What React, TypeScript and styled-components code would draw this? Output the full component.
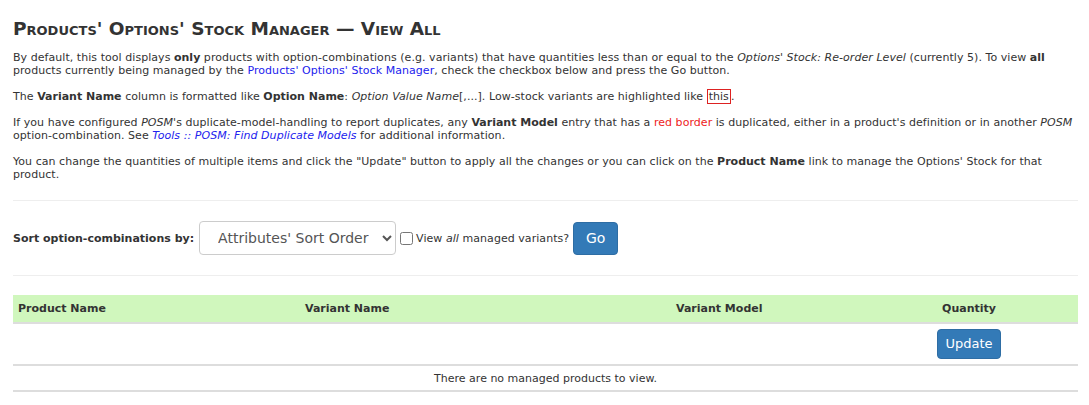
import React from "react";
import styled, { createGlobalStyle } from "styled-components";

const Global = createGlobalStyle`
  html, body { margin: 0; padding: 0; background: #fff; }
  body {
    font-family: "DejaVu Sans", Verdana, sans-serif;
    font-size: 11px;
    line-height: 13px;
    color: #333;
  }
`;

const Page = styled.div`
  padding: 0 11px 0 13px;
`;

const Title = styled.h1`
  margin: 17px 0 10px;
  font-size: 18.5px;
  line-height: 24px;
  font-weight: bold;
  font-variant: small-caps;
  color: #333;
`;

const Para = styled.p`
  margin: 0 0 13px;
  letter-spacing: 0.05px;
  b { letter-spacing: 0; }
  &:last-of-type { margin-bottom: 19px; }
`;

const Link = styled.a<{ $italic?: boolean }>`
  color: #2222ee;
  text-decoration: none;
  font-style: ${(p) => (p.$italic ? "italic" : "normal")};
`;

const Red = styled.span`
  color: #ee2222;
`;

const Boxed = styled.span`
  border: 1px solid #dd2222;
  padding: 0 1px;
`;

const Rule = styled.hr`
  border: 0;
  border-top: 1px solid #eee;
  margin: 0;
`;

const SortForm = styled.form`
  display: flex;
  align-items: center;
  padding: 20px 0 20px;
`;

const Label = styled.label`
  font-weight: bold;
  margin-right: 5px;
`;

const SelectBox = styled.select`
  width: 197px;
  height: 34px;
  padding: 6px 10px 6px 14px;
  font-family: "DejaVu Sans", Verdana, sans-serif;
  font-size: 14px;
  color: #555;
  background: #fff;
  border: 1px solid #ccc;
  border-radius: 4px;
`;

const CheckLabel = styled.label`
  display: flex;
  align-items: center;
  margin: 0 4px 0 4px;
  letter-spacing: 0.05px;
  input { margin: 0 3px 0 0; width: 13px; height: 13px; }
`;

const Button = styled.button<{ $w: number; $h: number; $size: number }>`
  width: ${(p) => p.$w}px;
  height: ${(p) => p.$h}px;
  padding: 0;
  font-family: "DejaVu Sans", Verdana, sans-serif;
  font-size: ${(p) => p.$size}px;
  color: #fff;
  background: #337ab7;
  border: 1px solid #2e6da4;
  border-radius: 4px;
  vertical-align: middle;
`;

const Table = styled.table`
  width: 100%;
  border-collapse: collapse;
  margin-top: 19px;
`;

const Th = styled.th<{ $w: number; $center?: boolean }>`
  width: ${(p) => p.$w}px;
  background: #d0f7bd;
  text-align: ${(p) => (p.$center ? "center" : "left")};
  padding: 0 5px;
  height: 28px;
  box-sizing: border-box;
  border-bottom: 2px solid #ddd;
  font-weight: bold;
`;

const Td = styled.td<{ $center?: boolean }>`
  text-align: ${(p) => (p.$center ? "center" : "left")};
  padding: 4px 5px 5px;
  height: 42px;
  box-sizing: border-box;
  border-bottom: 2px solid #ddd;
  vertical-align: middle;
`;

const EmptyTd = styled.td`
  text-align: center;
  padding: 5px;
  height: 26px;
  box-sizing: border-box;
  border-bottom: 2px solid #ddd;
`;

export default function App() {
  return (
    <Page>
      <Global />
      <Title>Products' Options' Stock Manager — View All</Title>
      <Para>
        By default, this tool displays <b>only</b> products with option-combinations (e.g. variants) that have
        quantities less than or equal to the <i>Options' Stock: Re-order Level</i> (currently 5). To view <b>all</b>{" "}
        products currently being managed by the <Link href="#">Products' Options' Stock Manager</Link>, check the
        checkbox below and press the Go button.
      </Para>
      <Para>
        The <b>Variant Name</b> column is formatted like <b>Option Name</b>: <i>Option Value Name</i>[,...].
        Low-stock variants are highlighted like <Boxed>this</Boxed>.
      </Para>
      <Para>
        If you have configured <i>POSM</i>'s duplicate-model-handling to report duplicates, any <b>Variant Model</b>{" "}
        entry that has a <Red>red border</Red> is duplicated, either in a product's definition or in another{" "}
        <i>POSM</i> option-combination. See <Link href="#" $italic>Tools :: POSM: Find Duplicate Models</Link> for
        additional information.
      </Para>
      <Para>
        You can change the quantities of multiple items and click the "Update" button to apply all the changes or you
        can click on the <b>Product Name</b> link to manage the Options' Stock for that product.
      </Para>
      <Rule />
      <SortForm>
        <Label>Sort option-combinations by:</Label>
        <SelectBox defaultValue="attr">
          <option value="attr">Attributes' Sort Order</option>
        </SelectBox>
        <CheckLabel>
          <input type="checkbox" />
          <span>
            View <i>all</i> managed variants?
          </span>
        </CheckLabel>
        <Button type="button" $w={45} $h={33} $size={14}>Go</Button>
      </SortForm>
      <Rule />
      <Table>
        <thead>
          <tr>
            <Th $w={287}>Product Name</Th>
            <Th $w={371}>Variant Name</Th>
            <Th $w={189}>Variant Model</Th>
            <Th $w={218} $center>Quantity</Th>
          </tr>
        </thead>
        <tbody>
          <tr>
            <Td />
            <Td />
            <Td />
            <Td $center>
              <Button type="button" $w={64} $h={30} $size={13}>Update</Button>
            </Td>
          </tr>
          <tr>
            <EmptyTd colSpan={4}>There are no managed products to view.</EmptyTd>
          </tr>
        </tbody>
      </Table>
    </Page>
  );
}
